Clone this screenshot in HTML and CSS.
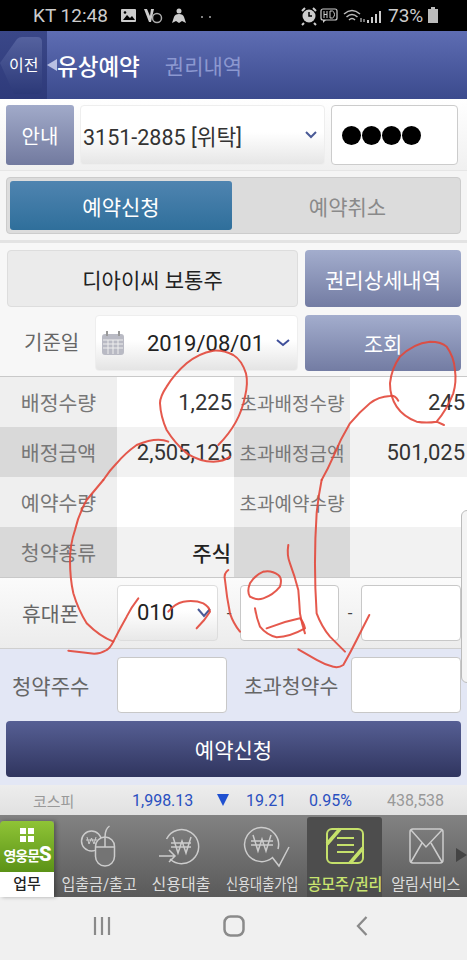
FILE: index.html
```html
<!DOCTYPE html>
<html lang="ko">
<head>
    <meta charset="UTF-8">
    <meta name="viewport" content="width=device-width, initial-scale=1.0">
    <title>유상예약</title>
    <link rel="stylesheet" href="styles.css">
</head>
<body>
<div class="phone">
    <div class="status-bar">
        <span class="status-text">KT 12:48</span>
        <svg class="status-left" viewBox="0 0 100 20" width="100" height="20">
            <rect x="1" y="3" width="15" height="13" rx="1" fill="#ccc"/>
            <path d="M3 14l4-5 3 3 2-2 3 4z" fill="#000"/>
            <circle cx="5" cy="6.500" r="1.300" fill="#000"/>
            <path d="M24 3l5 13h2l3-13h-3l-1 7-3-7z" fill="#ccc"/>
            <circle cx="37" cy="12" r="4.500" fill="none" stroke="#aaa" stroke-width="1.500"/>
            <circle cx="59" cy="5" r="2.500" fill="#ccc"/>
            <path d="M52 17l2-6q1-3 5-3t5 3l2 6-4-2-3 2-3-2z" fill="#ccc"/>
            <circle cx="82" cy="11" r="1" fill="#aaa"/>
            <circle cx="90" cy="11" r="1" fill="#aaa"/>
        </svg>
        <svg class="status-right" viewBox="0 0 120 20" width="120" height="20">
            <circle cx="10" cy="10" r="6.500" fill="#ccc"/>
            <path d="M10 6v4h3" stroke="#000" stroke-width="1.500" fill="none"/>
            <path d="M3 5l3-3M17 5l-3-3M5 17l-2 2M15 17l2 2" stroke="#ccc" stroke-width="2"/>
            <rect x="22" y="3" width="16" height="11" rx="2" fill="none" stroke="#ccc" stroke-width="1.200"/>
            <path d="M25 5v7M25 8.500h3M28 5v7M31 5v7h2.500q2-1 2-3.500t-2-3.500z" stroke="#ccc" stroke-width="1" fill="none"/>
            <path d="M24 14v3l3-3" fill="#ccc"/>
            <path d="M45 8q8-7 16 0M47.500 11q5.500-5 11 0M50 14q3-3 6 0" stroke="#bbb" stroke-width="1.500" fill="none"/>
            <path d="M62 16v-4M65 16v-3" stroke="#999" stroke-width="1.500"/>
            <path d="M69 17v-3M73 17v-6M77 17v-9M81 17V5" stroke="#ccc" stroke-width="2"/>
        </svg>
        <span class="status-pct">73%</span>
        <span class="battery"></span>
    </div>

    <header class="title-bar">
        <div class="back">
            <svg class="back-shape" viewBox="0 0 47 68" width="47" height="68">
                <defs>
                    <linearGradient id="backFill" x1="0" y1="0" x2="0" y2="1">
                        <stop offset="0" stop-color="#55629f"/>
                        <stop offset="1" stop-color="#2c3978"/>
                    </linearGradient>
                </defs>
                <path d="M0 32L17 8q2-2 5-2h15q5 0 5 5v47q0 5-5 5H14z" fill="url(#backFill)"/>
            </svg>
            <span class="back-text">이전</span>
        </div>
        <span class="back-arrow"></span>
        <h1 class="title">유상예약</h1>
        <span class="title-sub">권리내역</span>
    </header>

    <div class="account-row">
        <div class="btn-info">안내</div>
        <div class="account-select">
            <span>3151-2885 [위탁]</span>
            <svg class="chevron" viewBox="0 0 12 8" width="12" height="8"><path d="M1 1l5 5 5-5" fill="none" stroke="#4a5a96" stroke-width="2"/></svg>
        </div>
        <div class="password"><i></i><i></i><i></i><i></i></div>
    </div>

    <div class="tab-row">
        <div class="tabs">
            <div class="tab tab-active">예약신청</div>
            <div class="tab tab-off">예약취소</div>
        </div>
    </div>

    <div class="search">
        <div class="search-line">
            <div class="stock-name">디아이씨 보통주</div>
            <div class="btn-blue">권리상세내역</div>
        </div>
        <div class="search-line date-line">
            <div class="date-label">기준일</div>
            <div class="date-select">
                <svg class="calendar" viewBox="0 0 22 24" width="22" height="24">
                    <rect x="0" y="3" width="22" height="21" rx="3" fill="#b9bac4"/>
                    <path d="M1 9h20M1 13h20M1 17h20M6 9v14M11 9v14M16 9v14" stroke="#eee" stroke-width="1"/>
                    <path d="M5 0v5M17 0v5" stroke="#999" stroke-width="2"/>
                </svg>
                <span class="date-value">2019/08/01</span>
                <svg class="chevron" viewBox="0 0 14 8" width="14" height="8"><path d="M1 1l6 5 6-5" fill="none" stroke="#3f4f9a" stroke-width="2"/></svg>
            </div>
            <div class="btn-blue">조회</div>
        </div>
    </div>

    <div class="info-table">
        <div class="cell label wide">배정수량</div>
        <div class="cell value">1,225</div>
        <div class="cell label">초과배정수량</div>
        <div class="cell value">245</div>
        <div class="cell label wide dark">배정금액</div>
        <div class="cell value grey">2,505,125</div>
        <div class="cell label dark">초과배정금액</div>
        <div class="cell value grey">501,025</div>
        <div class="cell label wide">예약수량</div>
        <div class="cell value"></div>
        <div class="cell label">초과예약수량</div>
        <div class="cell value"></div>
        <div class="cell label wide dark">청약종류</div>
        <div class="cell value grey kind">주식</div>
        <div class="cell label dark"></div>
        <div class="cell value grey"></div>
    </div>

    <div class="phone-row">
        <div class="phone-label">휴대폰</div>
        <div class="phone-select">
            <span>010</span>
            <svg class="chevron" viewBox="0 0 14 10" width="14" height="10"><path d="M1 1l6 7 6-7" fill="none" stroke="#4a5a96" stroke-width="2"/></svg>
        </div>
        <span class="dash">-</span>
        <div class="field phone-field"></div>
        <span class="dash">-</span>
        <div class="field phone-field"></div>
    </div>

    <div class="order">
        <div class="order-line">
            <div class="order-label first">청약주수</div>
            <div class="field qty"></div>
            <div class="order-label second">초과청약수</div>
            <div class="field qty"></div>
        </div>
        <div class="btn-submit">예약신청</div>
    </div>

    <div class="ticker">
        <span class="tk-name">코스피</span>
        <span class="tk-price">1,998.13</span>
        <span class="tk-arrow"></span>
        <span class="tk-change">19.21</span>
        <span class="tk-rate">0.95%</span>
        <span class="tk-volume">438,538</span>
    </div>

    <nav class="menu">
        <div class="menu-home">
            <div class="home-top">
                <div class="home-grid"><i></i><i></i><i></i><i></i></div>
                <div class="home-logo">영웅문<b>S</b></div>
            </div>
            <div class="home-label">업무</div>
        </div>
        <div class="menu-item item-deposit">
            <svg class="menu-icon" viewBox="0 0 60 50" width="60" height="50">
                <circle cx="21.500" cy="21" r="10" />
                <path d="M17 17l2 7 2.500-6 2.500 6 2-7M16 20h11" stroke-width="1"/>
                <rect class="solid" x="25.500" y="17" width="19" height="29" rx="9.500"/>
                <path d="M35 17v10M25.500 27h19M35 17q0-8 4.500-11"/>
            </svg>
            <span class="squeeze-a">입출금/출고</span>
        </div>
        <div class="menu-item item-loan">
            <svg class="menu-icon" viewBox="0 0 60 50" width="60" height="50">
                <path d="M15.500 19A17 17 0 1 1 19 39"/>
                <path d="M22 17l5 16 4-12 4 12 5-16M20 23h20M20 27h20"/>
                <path d="M8 36h16M18 30l6 6-6 6"/>
            </svg>
            <span>신용대출</span>
        </div>
        <div class="menu-item item-join">
            <svg class="menu-icon" viewBox="0 0 60 50" width="60" height="50">
                <path d="M40 38A17 17 0 1 1 46 29"/>
                <path d="M21 15l5 16 4-12 4 12 5-16M19 21h22M19 25h22"/>
                <path d="M40 37l7 9 10-19"/>
            </svg>
            <span class="squeeze-b">신용대출가입</span>
        </div>
        <div class="menu-item item-active">
            <svg class="menu-icon" viewBox="0 0 60 50" width="60" height="50">
                <rect x="12" y="9" width="36" height="34" rx="5"/>
                <path class="stripe" d="M12 24L25 9M48 28L35 43"/>
                <path d="M22 18h17M22 25h17M22 32h17"/>
            </svg>
            <span class="squeeze-a">공모주/권리</span>
        </div>
        <div class="menu-item item-alarm">
            <svg class="menu-icon" viewBox="0 0 60 50" width="60" height="50">
                <rect x="14" y="9" width="33" height="34" rx="3"/>
                <path d="M15 10l15 17 16-17M15 42l11-19M46 42L35 23"/>
            </svg>
            <span class="squeeze-a">알림서비스</span>
        </div>
        <span class="menu-more"></span>
    </nav>

    <div class="soft-keys">
        <svg viewBox="0 0 18 20" width="18" height="20" class="key-recent"><path d="M2 1v18M9 1v18M16 1v18" stroke="#8a8a8a" stroke-width="2.200"/></svg>
        <svg viewBox="0 0 22 22" width="22" height="22" class="key-home"><rect x="1.500" y="1.500" width="19" height="19" rx="6" fill="none" stroke="#8a8a8a" stroke-width="2.500"/></svg>
        <svg viewBox="0 0 12 20" width="12" height="20" class="key-back"><path d="M10.500 1L2 10l8.500 9" fill="none" stroke="#8a8a8a" stroke-width="2.300"/></svg>
    </div>

    <div class="scroll-hint"></div>

    <!-- 빨간 펜 표시 -->
    <svg class="ink" viewBox="0 0 467 960" width="467" height="960">
        <g transform="translate(0 240) scale(.3333)">
            <path d="M655 615Q720 550 735 470Q745 430 738 400Q725 360 700 345Q670 330 640 332Q595 340 560 370Q525 400 500 440Q480 470 480 490Q482 530 500 570Q525 610 560 640Q600 665 640 665Q670 665 690 650"/>
            <path d="M505 605Q470 590 410 615Q375 640 350 670Q330 690 310 720"/>
            <path d="M1332 555L1310 545Q1280 550 1250 545Q1210 530 1190 500Q1170 470 1170 430Q1175 385 1200 350Q1240 310 1290 305Q1325 305 1340 320Q1362 350 1365 390Q1370 425 1360 460Q1340 510 1310 545"/>
            <path d="M1195 482Q1185 465 1170 468Q1135 470 1110 490Q1080 515 1050 550Q1020 600 1000 650Q985 685 965 720"/>
        </g>
        <g transform="translate(0 480) scale(.3333)">
            <path d="M310 0Q285 30 260 60Q235 105 225 150Q210 195 210 240Q210 295 220 340Q235 390 260 430Q300 470 340 485"/>
            <path d="M415 355Q395 380 380 410Q360 445 340 485Q330 505 320 510Q295 525 270 520L205 512"/>
            <path d="M965 0Q955 50 950 100Q945 175 945 250Q945 325 950 400Q965 440 990 470L1035 515"/>
            <path d="M1108 405Q1090 440 1070 480Q1050 520 1030 555Q1015 565 1000 560Q975 555 950 540L895 508"/>
            <path d="M685 270Q670 280 675 300Q680 350 690 400Q700 430 720 455"/>
            <path d="M790 275Q765 285 750 310Q740 335 750 350Q770 362 790 355Q820 345 840 320Q848 295 835 285Q815 270 790 275"/>
            <path d="M865 195Q860 225 870 250Q885 290 895 330Q898 365 900 400Q905 430 915 460"/>
            <path d="M765 385Q770 415 780 440Q800 465 830 472Q870 470 915 445Q910 425 900 415Q850 425 800 445"/>
            <path d="M505 395Q525 370 550 365Q585 360 610 370Q628 380 630 395Q615 420 590 445"/>
        </g>
    </svg>
</div>
</body>
</html>
```

FILE: styles.css
```css
* {
    box-sizing: border-box;
}
body {
    margin: 0;
    font-family: "Roboto", "Noto Sans CJK KR", sans-serif;
    background-color: #f0f0f0;
    color: #333;
}
.phone {
    position: relative;
    width: 467px;
    height: 960px;
    overflow: hidden;
}

/* status bar */
.status-bar {
    display: flex;
    align-items: center;
    height: 31px;
    padding-left: 33px;
    background-color: #000;
    color: #ccc;
}
.status-text {
    flex: none;
    width: 87px;
    font-size: 19px;
}
.status-left {
    flex: none;
}
.status-right {
    flex: none;
    margin-left: 79px;
}
.status-pct {
    flex: none;
    width: 39px;
    margin-left: -31px;
    font-size: 19px;
}
.battery {
    position: relative;
    flex: none;
    width: 10px;
    height: 14px;
    margin-left: 1px;
    background-color: #bbb;
}
.battery::before {
    content: "";
    position: absolute;
    top: -2px;
    left: 3px;
    width: 4px;
    height: 2px;
    background-color: #bbb;
}

/* title */
.title-bar {
    display: flex;
    align-items: center;
    height: 68px;
    background: linear-gradient(#5e6db3, #3b4a8d);
}
.back {
    position: relative;
    width: 47px;
    height: 68px;
    background: linear-gradient(#3a4788, #2e3a7a);
}
.back-shape {
    position: absolute;
    top: 0;
    left: 0;
}
.back-text {
    position: absolute;
    top: 21px;
    left: 9px;
    font-size: 16px;
    color: #fff;
    white-space: nowrap;
}
.back-arrow {
    width: 0;
    height: 0;
    border-top: 6px solid transparent;
    border-bottom: 6px solid transparent;
    border-right: 10px solid #b9c1e3;
}
.title {
    margin: 0;
    font-size: 22.500px;
    font-weight: 500;
    color: #fff;
}
.title-sub {
    margin-left: 25px;
    font-size: 21px;
    color: #8c98d0;
}

/* account */
.account-row {
    display: flex;
    height: 72px;
    padding: 6px 9px 6px 6px;
    background: linear-gradient(#fff, #f0f0f0);
    border-bottom: 1px solid #e6e6e6;
}
.btn-info {
    display: flex;
    align-items: center;
    justify-content: center;
    width: 68px;
    height: 60px;
    border-radius: 3px;
    background: linear-gradient(#a1aac9, #727a9f);
    color: #fff;
    font-size: 20px;
}
.account-select {
    display: flex;
    align-items: center;
    justify-content: space-between;
    width: 245px;
    height: 60px;
    margin-left: 6px;
    padding: 0 7px 0 2px;
    border-radius: 4px;
    border: 1px solid #eee;
    background: linear-gradient(#fff 45%, #e6e6e6);
    font-size: 21.500px;
}
.password {
    display: flex;
    align-items: center;
    gap: 1px;
    width: 127px;
    height: 60px;
    margin-left: 6px;
    padding-left: 10px;
    background-color: #fff;
    border: 1px solid #ccc;
    border-radius: 4px;
}
.password i {
    width: 19px;
    height: 19px;
    border-radius: 50%;
    background-color: #000;
}

/* tabs */
.tab-row {
    height: 72px;
    padding: 6px 6px 0;
    background-color: #f5f5f5;
    border-bottom: 3px solid #e3e3e3;
}
.tabs {
    display: flex;
    height: 57px;
    padding: 3px;
    background-color: #dcdcdc;
    border: 1px solid #ccc;
    border-radius: 4px;
}
.tab {
    display: flex;
    flex: 1;
    align-items: center;
    justify-content: center;
    font-size: 21px;
    color: #8a8a8a;
}
.tab-off {
    padding-left: 6px;
}
.tab-active {
    flex: none;
    width: 222px;
    border-radius: 3px;
    background: linear-gradient(#4f84b0, #2f6f9b);
    color: #fff;
}

/* search */
.search {
    display: flex;
    flex-direction: column;
    gap: 8px;
    height: 134px;
    padding: 7px 6px 0 7px;
    background-color: #f7f7f7;
    border-bottom: 1px solid #c9c9c9;
}
.search-line {
    display: flex;
    gap: 7px;
    height: 57px;
}
.date-line {
    height: 56px;
}
.stock-name {
    display: flex;
    align-items: center;
    justify-content: center;
    width: 291px;
    border-radius: 4px;
    border: 1px solid #ddd;
    background-color: #ebebeb;
    font-size: 21px;
    color: #222;
}
.btn-blue {
    display: flex;
    align-items: center;
    justify-content: center;
    width: 156px;
    border-radius: 4px;
    background: linear-gradient(#a3adcd, #737ca3);
    color: #fff;
    font-size: 21px;
}
.date-label {
    width: 81px;
    padding-left: 17px;
    font-size: 20px;
    line-height: 56px;
    color: #666;
    white-space: nowrap;
}
.date-select {
    display: flex;
    align-items: center;
    width: 203px;
    padding: 0 7px 0 6px;
    border-radius: 4px;
    border: 1px solid #eee;
    background: linear-gradient(#fff 45%, #e4e4e4);
}
.date-value {
    flex: 1;
    padding-left: 23px;
    font-size: 22px;
    color: #222;
}

/* table */
.info-table {
    display: grid;
    grid-template-columns: 117px 117px 116px 117px;
    grid-auto-rows: 50px;
    height: 201px;
    border-bottom: 1px solid #c9c9c9;
}
.cell {
    display: flex;
    align-items: center;
}
.label {
    justify-content: center;
    background-color: #efefef;
    font-size: 19px;
    color: #777;
    white-space: nowrap;
}
.label.wide {
    font-size: 20.500px;
}
.label.dark {
    background-color: #d9d9d9;
}
.value {
    justify-content: flex-end;
    padding-right: 2px;
    background-color: #fff;
    font-size: 22px;
    color: #333;
}
.value.grey {
    background-color: #f2f2f2;
}
.kind {
    padding-right: 3px;
    font-size: 21px;
    font-weight: 500;
    color: #222;
}

/* phone */
.phone-row {
    display: flex;
    align-items: center;
    height: 71px;
    padding-bottom: 1px;
    background: linear-gradient(#fbfbfb, #ececec);
    border-bottom: 1px solid #cfcfcf;
}
.phone-label {
    width: 117px;
    padding-left: 22px;
    font-size: 20.500px;
    color: #666;
    white-space: nowrap;
}
.phone-select {
    display: flex;
    align-items: center;
    justify-content: space-between;
    width: 101px;
    height: 56px;
    padding: 0 6px 0 19px;
    border: 1px solid #ddd;
    border-radius: 4px;
    background: linear-gradient(#fff 45%, #e8e8e8);
    font-size: 22px;
    color: #222;
}
.dash {
    width: 22px;
    text-align: center;
    font-size: 17px;
    color: #444;
}
.field {
    background-color: #fff;
    border: 1px solid #c8c8c8;
    border-radius: 4px;
}
.phone-field {
    width: 99px;
    height: 56px;
}
.phone-field:last-child {
    width: 100px;
}

/* order */
.order {
    height: 136px;
    padding: 8px 6px 0;
    background-color: #e3e7f5;
}
.order-line {
    display: flex;
    align-items: center;
    height: 56px;
}
.order-label {
    font-size: 21px;
    color: #666;
    white-space: nowrap;
}
.order-label.first {
    width: 111px;
    padding-left: 6px;
}
.order-label.second {
    width: 124px;
    padding-left: 17px;
    font-size: 20.500px;
}
.qty {
    width: 110px;
    height: 56px;
}
.btn-submit {
    display: flex;
    align-items: center;
    justify-content: center;
    height: 56px;
    margin-top: 8px;
    border-radius: 4px;
    background: linear-gradient(#565f94, #30355f);
    color: #fff;
    font-size: 21px;
}

/* ticker */
.ticker {
    display: flex;
    align-items: center;
    height: 30px;
    background: linear-gradient(#ededed, #e1e1e1);
    font-size: 16px;
    color: #2a50c0;
}
.tk-name {
    width: 132px;
    padding-left: 33px;
    font-size: 15px;
    color: #999;
}
.tk-price {
    width: 85px;
}
.tk-arrow {
    width: 0;
    height: 0;
    border-left: 6px solid transparent;
    border-right: 6px solid transparent;
    border-top: 12px solid #1f50d0;
}
.tk-change {
    width: 63px;
    margin-left: 17px;
}
.tk-rate {
    width: 78px;
}
.tk-volume {
    color: #999;
}

/* bottom menu */
.menu {
    position: relative;
    display: flex;
    height: 82px;
    background: linear-gradient(#828282, #5a5a5a);
}
.menu-home {
    flex: none;
    width: 54px;
    margin-top: 6px;
    box-shadow: 2px 0 4px rgba(0, 0, 0, 0.3);
}
.home-top {
    height: 51px;
    padding-top: 7px;
    border-radius: 4px 4px 0 0;
    background: linear-gradient(#8fc436, #5b9217);
}
.home-grid {
    display: grid;
    grid-template-columns: 6px 6px;
    gap: 2px;
    justify-content: center;
}
.home-grid i {
    height: 6px;
    background-color: #fff;
}
.home-logo {
    height: 22px;
    margin-top: 1px;
    text-align: center;
    font-size: 14px;
    line-height: 22px;
    font-weight: 700;
    letter-spacing: -1px;
    color: #fff;
    white-space: nowrap;
}
.home-logo b {
    font-size: 20px;
}
.home-label {
    height: 25px;
    background-color: #fff;
    text-align: center;
    font-size: 15px;
    font-weight: 500;
    line-height: 25px;
    color: #222;
}
.menu-item {
    display: flex;
    flex: none;
    flex-direction: column;
    align-items: center;
    padding-top: 5px;
    font-size: 16px;
    line-height: 25px;
    color: #ddd;
    white-space: nowrap;
}
.menu-item span {
    margin-top: 2px;
}
.squeeze-a {
    transform: scaleX(0.94);
}
.squeeze-b {
    transform: scaleX(0.82);
}
.menu-icon {
    fill: none;
    stroke: #ccc;
    stroke-width: 1.500;
}
.menu-icon .solid {
    fill: #747474;
}
.item-deposit {
    width: 91px;
}
.item-loan {
    width: 72px;
}
.item-join {
    width: 90px;
}
.item-active {
    width: 75px;
    margin-top: 2px;
    padding-top: 3px;
    border-radius: 3px 3px 0 0;
    background-color: #4d4d4d;
    color: #c9e46f;
    font-weight: 500;
}
.item-active .menu-icon {
    stroke: #c5e06b;
    stroke-width: 2;
}
.item-active .stripe {
    stroke-width: 3.500;
}
.item-alarm {
    width: 88px;
}
.menu-more {
    position: absolute;
    top: 33px;
    right: 0;
    width: 0;
    height: 0;
    border-top: 7px solid transparent;
    border-bottom: 7px solid transparent;
    border-left: 11px solid #444;
}

/* soft keys */
.soft-keys {
    display: flex;
    align-items: center;
    justify-content: space-between;
    height: 62px;
    padding: 0 99px 4px 93px;
    background-color: #f0f0f0;
}

/* overlays */
.scroll-hint {
    position: absolute;
    top: 510px;
    left: 461px;
    width: 12px;
    height: 173px;
    border: 1px solid #bbb;
    border-radius: 6px;
    background-color: #f4f4f4;
}
.ink {
    position: absolute;
    top: 0;
    left: 0;
    pointer-events: none;
    fill: none;
}
.ink path {
    stroke: #e2473a;
    stroke-width: 6;
    stroke-linecap: round;
    stroke-linejoin: round;
    opacity: 0.9;
}
```
